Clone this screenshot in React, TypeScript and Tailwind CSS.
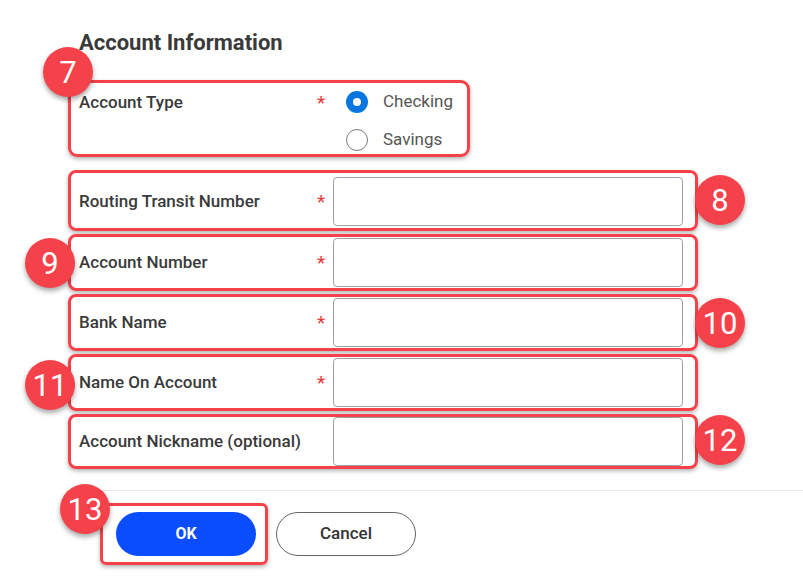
import React from 'react';

const Badge: React.FC<{ n: number; className: string }> = ({ n, className }) => (
  <div
    className={`absolute z-10 flex h-[50px] w-[50px] items-center justify-center rounded-full bg-[#f5424a] text-[31px] leading-none text-white shadow-[0_3px_5px_rgba(0,0,0,0.35)] ${className}`}
  >
    {n}
  </div>
);

interface FieldRowProps {
  label: string;
  required?: boolean;
  badge: React.ReactNode;
  className?: string;
}

const FieldRow: React.FC<FieldRowProps> = ({ label, required, badge, className = '' }) => (
  <div
    className={`relative ml-[68px] flex w-[630px] items-center rounded-[8px] border-[3px] border-[#f5424a] pl-[8px] shadow-[0_2px_4px_rgba(0,0,0,0.3)] ${className}`}
  >
    {badge}
    <span className="w-[238px] text-[17px] font-medium text-[#3a3a3a]">{label}</span>
    <span className="w-[16px] text-[19px] leading-none text-[#e53935]">{required ? '*' : ''}</span>
    <div className="h-[49px] w-[350px] rounded-[4px] border border-[#9aa1a9] bg-white" />
  </div>
);

export default function App() {
  return (
    <div className="relative h-[579px] w-[803px] overflow-hidden bg-white font-['Roboto',sans-serif]">
      <h2 className="pl-[79px] pt-[29px] text-[22px] font-bold leading-[28px] text-[#3a3a3a]">Account Information</h2>

      {/* Account Type */}
      <div className="relative ml-[68px] mt-[23px] flex h-[77px] w-[402px] rounded-[9px] border-[3px] border-[#f5424a] pl-[8px] pt-[8px] shadow-[0_2px_4px_rgba(0,0,0,0.3)]">
        <Badge n={7} className="left-[-28px] top-[-36px]" />
        <span className="w-[238px] text-[17px] font-medium leading-[22px] text-[#3a3a3a]">Account Type</span>
        <span className="w-[16px] pt-[2px] text-[19px] leading-none text-[#e53935]">*</span>
        <div className="ml-[13px] flex flex-col gap-[16px]">
          <label className="flex h-[22px] items-center gap-[15px] text-[17px] text-[#555]">
            <span className="h-[22px] w-[22px] rounded-full border-[7px] border-[#0875e1] bg-white" />
            Checking
          </label>
          <label className="flex h-[22px] items-center gap-[15px] text-[17px] text-[#555]">
            <span className="h-[22px] w-[22px] rounded-full border-[1.5px] border-[#7a7a7a] bg-white" />
            Savings
          </label>
        </div>
      </div>

      <div className="mt-[13px] flex flex-col gap-[3px]">
        <FieldRow
          label="Routing Transit Number"
          required
          className="h-[61px] pt-[2px]"
          badge={<Badge n={8} className="right-[-50px] top-[2px]" />}
        />
        <FieldRow
          label="Account Number"
          required
          className="h-[57px]"
          badge={<Badge n={9} className="left-[-46px] top-[1px]" />}
        />
        <FieldRow
          label="Bank Name"
          required
          className="h-[57px]"
          badge={<Badge n={10} className="right-[-50px] top-[1px]" />}
        />
        <FieldRow
          label="Name On Account"
          required
          className="h-[57px]"
          badge={<Badge n={11} className="left-[-46px] top-[3px]" />}
        />
        <FieldRow
          label="Account Nickname (optional)"
          className="h-[55px]"
          badge={<Badge n={12} className="right-[-50px] top-[-2px]" />}
        />
      </div>

      <div className="ml-[100px] mt-[21px] h-px bg-[#e6e6e6]" />

      <div className="ml-[100px] mt-[12px] flex items-center gap-[8px]">
        <div className="relative flex h-[62px] w-[168px] items-center rounded-[6px] border-[3px] border-[#f5424a] pl-[13px] shadow-[0_2px_4px_rgba(0,0,0,0.3)]">
          <Badge n={13} className="left-[-43px] top-[-22px]" />
          <button className="h-[44px] w-[140px] rounded-full bg-[#0a4cff] text-[16px] font-bold text-white">OK</button>
        </div>
        <button className="h-[44px] w-[140px] rounded-full border border-[#666] bg-white text-[17px] font-medium text-[#333]">
          Cancel
        </button>
      </div>
    </div>
  );
}
